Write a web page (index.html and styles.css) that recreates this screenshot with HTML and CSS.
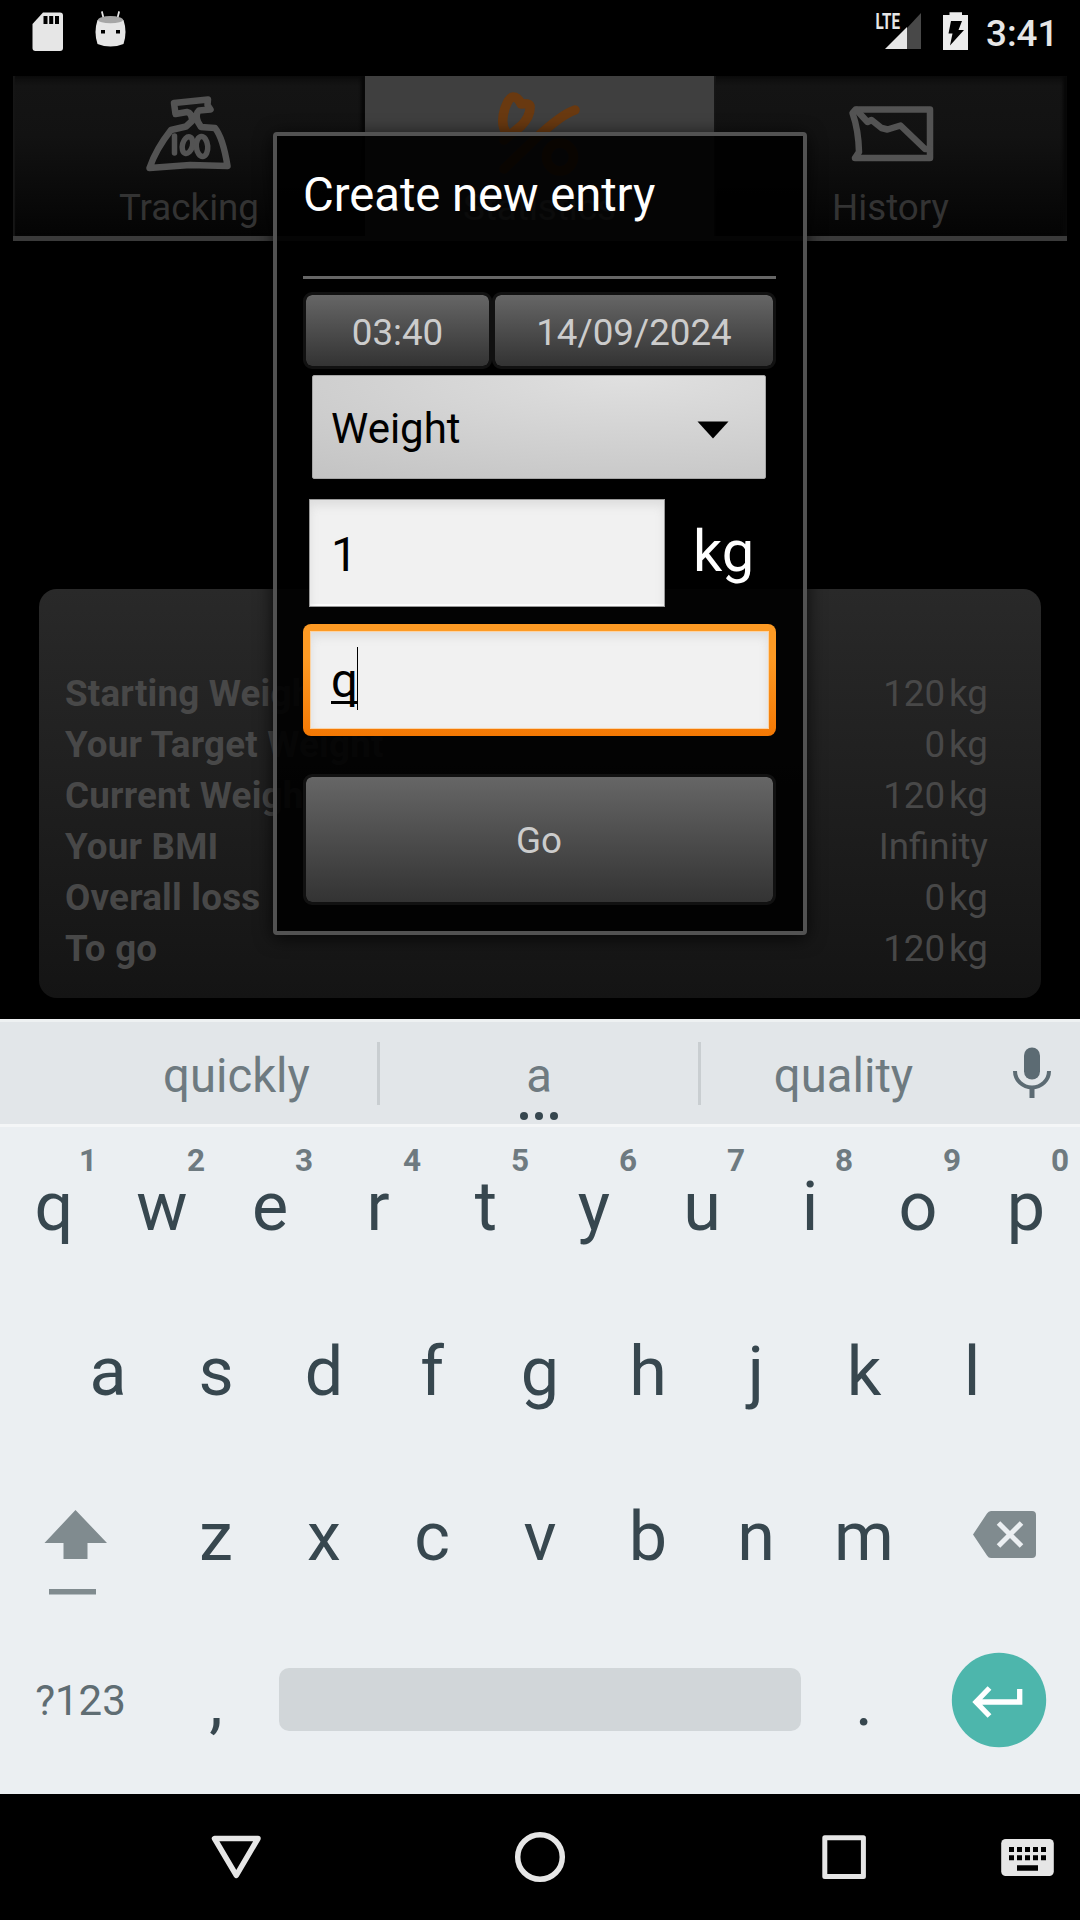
FILE: index.html
```html
<!DOCTYPE html>
<html lang="en">
<head>
<meta charset="utf-8">
<title>Create new entry</title>
<link rel="stylesheet" href="styles.css">
</head>
<body>
<div class="phone">
  <header class="status">
    <svg class="status-left" viewBox="0 0 140 76" width="140" height="76">
      <path fill="#e6e6e6" d="M43 12.5H60a3 3 0 0 1 3 3V48a3 3 0 0 1-3 3H35.500a3 3 0 0 1-3-3V24z"/>
      <path d="M43.500 16h4v8h-4zM49.200 16h4v8h-4zM55 16h4v8h-4z"/>
      <path stroke="#e6e6e6" stroke-width="1.800" stroke-linecap="round" d="M102 12l1.500 6M119 12l-1.500 6"/>
      <path fill="#e6e6e6" d="M97.500 20q13-5 26 0 4 12 0 24-13 5-26 0-4-12 0-24z"/>
      <ellipse cx="110.500" cy="19.700" rx="12.500" ry="3.600" fill="#a6a6a6"/>
      <path d="M101 30h4v3.500h-4zM116 30h4v3.500h-4z"/>
    </svg>
    <svg class="status-right" viewBox="870 0 108 76" width="108" height="76">
      <text class="lte" x="875.500" y="29" textLength="24.500" lengthAdjust="spacingAndGlyphs">LTE</text>
      <path fill="#484848" d="M907 28L921 13V49H907z"/>
      <path fill="#e6e6e6" d="M885 49L907 27V49z"/>
      <path fill="#ececec" d="M943 15h6.500v-2.800h12.500V15h6v35h-25z"/>
      <path d="M951 21h11l-3.500 9h5.500L950 45.500l2.500-12h-4z"/>
    </svg>
    <span class="clock">3:41</span>
  </header>

  <main class="app">
    <nav class="tabs">
      <div class="tab">
        <svg class="tab-icon" viewBox="141 90 96 90" width="96" height="90" fill="none" stroke="#535353" stroke-width="6.500" stroke-linejoin="round" stroke-linecap="round">
          <path d="M174 103L208 99.500 207.500 105 210.500 109.500 199 110.500Q195 114 198 122L201 127 215 128Q223 138 227.500 166L190 165 149.500 168Q156 149 171 130L186 126.500 192 121Q192 113 187 112L175.500 114z"/>
          <path stroke-width="5.500" d="M174.500 136V153"/>
          <ellipse cx="187.500" cy="145" rx="5" ry="8.500" stroke-width="5.500" transform="rotate(15 187 145)"/>
          <ellipse cx="202" cy="146.500" rx="5.700" ry="10" stroke-width="5.500" transform="rotate(-5 202 146)"/>
        </svg>
        <span class="tab-label">Tracking</span>
      </div>
      <div class="tab tab-active">
        <svg class="tab-icon" viewBox="492 90 96 90" width="96" height="90" fill="none" stroke="#693910" stroke-width="9.500" stroke-linejoin="round" stroke-linecap="round">
          <path d="M506 132Q500 124 505 108 509 97 513 97 518 97 521 104 529 103 530 106 531 116 521 126L504 140"/>
          <path d="M575 110Q562 114 535 139L504 169"/>
          <ellipse cx="560" cy="157" rx="13.500" ry="14"/>
        </svg>
        <span class="tab-label">Statistics</span>
      </div>
      <div class="tab">
        <svg class="tab-icon" viewBox="842.500 90 96 90" width="96" height="90" fill="none" stroke="#535353" stroke-width="6.500" stroke-linejoin="round" stroke-linecap="round">
          <path d="M852 113L855 109.500H929.500V158H854.500L858.500 152Q858 130 852 113z"/>
          <path d="M856 110L867 122 871 120 881 128 887 129.500 900 125.500 924.500 149 929 149"/>
        </svg>
        <span class="tab-label">History</span>
      </div>
    </nav>

    <section class="stats">
      <div class="stat"><b>Starting Weight</b><span>120<i>kg</i></span></div>
      <div class="stat"><b>Your Target Weight</b><span>0<i>kg</i></span></div>
      <div class="stat"><b>Current Weight</b><span>120<i>kg</i></span></div>
      <div class="stat"><b>Your BMI</b><span>Infinity</span></div>
      <div class="stat"><b>Overall loss</b><span>0<i>kg</i></span></div>
      <div class="stat"><b>To go</b><span>120<i>kg</i></span></div>
    </section>
  </main>

  <section class="dialog">
    <h1 class="dialog-title">Create new entry</h1>
    <div class="when">
      <div class="button time">03:40</div>
      <div class="button date">14/09/2024</div>
    </div>
    <div class="spinner">
      <span>Weight</span>
      <svg class="arrow" viewBox="0 0 32 18" width="32" height="18"><path d="M.500.500H31.500L16 17.500z"/></svg>
    </div>
    <div class="amount">
      <div class="field">1</div>
      <span class="unit">kg</span>
    </div>
    <div class="focus"><div class="field-inner"><span class="composing">q</span><span class="caret"></span></div></div>
    <div class="button go">Go</div>
  </section>

  <section class="keyboard">
    <div class="suggestions">
      <span class="word first">quickly</span>
      <span class="rule"></span>
      <span class="word">a
        <svg class="more" viewBox="0 0 40 10" width="40" height="10" fill="#37474f"><circle cx="5" cy="5" r="4"/><circle cx="20" cy="5" r="4"/><circle cx="35" cy="5" r="4"/></svg>
      </span>
      <span class="rule"></span>
      <span class="word last">quality</span>
      <svg class="mic" viewBox="1003 1022 77 102" width="77" height="102">
        <rect x="1024" y="1047.500" width="16" height="32" rx="8" fill="#5c6b73"/>
        <path d="M1015 1071a17 16.500 0 0 0 34 0" fill="none" stroke="#5c6b73" stroke-width="4"/>
        <path d="M1029.500 1088h5v10h-5z" fill="#5c6b73"/>
      </svg>
    </div>
    <div class="row">
      <div class="key">q<sup>1</sup></div><div class="key">w<sup>2</sup></div><div class="key">e<sup>3</sup></div><div class="key">r<sup>4</sup></div><div class="key">t<sup>5</sup></div><div class="key">y<sup>6</sup></div><div class="key">u<sup>7</sup></div><div class="key">i<sup>8</sup></div><div class="key">o<sup>9</sup></div><div class="key">p<sup>0</sup></div>
    </div>
    <div class="row">
      <div class="key">a</div><div class="key">s</div><div class="key">d</div><div class="key">f</div><div class="key">g</div><div class="key">h</div><div class="key">j</div><div class="key">k</div><div class="key">l</div>
    </div>
    <div class="row">
      <svg viewBox="0 1457 162 165" width="162" height="165" fill="#808b8f"><path d="M75.500 1510L107 1543H87.500V1559H63.500V1543H44.500zM49 1589h47v5.500H49z"/></svg>
      <div class="key">z</div><div class="key">x</div><div class="key">c</div><div class="key">v</div><div class="key">b</div><div class="key">n</div><div class="key">m</div>
      <svg viewBox="918 1457 162 165" width="162" height="165"><path fill="#808b8f" d="M973 1534.500L987 1513.500Q988.500 1511 991 1511H1032a4 4 0 0 1 4 4V1554a4 4 0 0 1-4 4H991Q988.500 1558 987 1555.500z"/><path stroke="#ebeff2" stroke-width="5" d="M998.500 1523L1021.500 1546M1021.500 1523L998.500 1546"/></svg>
    </div>
    <div class="row">
      <div class="key symbols">?123</div>
      <div class="key">,</div>
      <div class="space"></div>
      <div class="key">.</div>
      <svg viewBox="918 1622 162 165" width="162" height="165"><ellipse cx="999" cy="1700" rx="47.200" ry="47.300" fill="#4db6ac"/><path fill="none" stroke="#fff" stroke-width="5.300" d="M989.500 1688L976 1702 989.500 1716M977 1702H1019.700V1689"/></svg>
    </div>
  </section>

  <footer class="navbar">
    <svg viewBox="0 1794 1080 126" width="1080" height="126" fill="none" stroke="#e6e6e6" stroke-width="5.500" stroke-linejoin="round">
      <path d="M214.500 1838.500H258L236.300 1875.300z"/>
      <circle cx="540" cy="1857" r="22.300"/>
      <rect x="824.800" y="1837.800" width="38.600" height="38.600" stroke-width="5"/>
      <rect x="1001.200" y="1839" width="52.600" height="37" rx="4.500" fill="#e6e6e6" stroke="none"/>
      <path stroke="#000" stroke-width="5" stroke-dasharray="5 3" d="M1009 1849.500h37.500M1009 1857.700h37.500"/>
      <path stroke="#000" d="M1017 1868h21"/>
    </svg>
  </footer>
</div>
</body>
</html>
```
FILE: styles.css
```css
* { box-sizing: border-box; }

body {
  margin: 0;
  background: #000;
  font-family: Roboto, "Liberation Sans", sans-serif;
  font-size: 36.75px;
}

svg { display: block; flex: none; }

.phone {
  position: relative;
  display: flex;
  flex-direction: column;
  width: 1080px;
  height: 1920px;
  overflow: hidden;
  background: #000;
}

/* Status bar */
.status { display: flex; height: 76px; }
.status-right { margin-left: auto; }
.lte { fill: #e6e6e6; font-size: 21.5px; font-weight: 700; }
.clock {
  width: 102px;
  padding-left: 8px;
  color: #e6e6e6;
  font-weight: 500;
  line-height: 68px;
}

/* Dimmed activity behind the dialog */
.app { height: 943px; }

.tabs {
  display: grid;
  grid-template-columns: 352px 349px 353px;
  height: 165px;
  margin: 0 13px;
}

.tab {
  display: flex;
  flex-direction: column;
  align-items: center;
  padding-top: 14px;
  border-bottom: 5px solid #3a3a3a;
  background: linear-gradient(#0c0c0c, #141414 10px, #121212 60px, #040404 100%);
  box-shadow: inset 2px 0 1px #161616, inset -4px 0 3px #080808;
  color: #333;
}

.tab-active {
  border-bottom: 0;
  background: #3f3f3f;
  box-shadow: none;
  color: #777;
}

.tab-label { padding-top: 6px; line-height: 43px; }

.stats {
  height: 409px;
  margin: 348px 39px 0;
  padding: 79px 53px 0 26px;
  border-radius: 18px;
  background: linear-gradient(#292929, #141414);
  color: #484848;
  line-height: 51px;
}

.stat { display: flex; justify-content: space-between; }
.stat b { letter-spacing: .2px; }
.stat i { margin-left: 4px; font-style: normal; }

/* Dialog */
.dialog {
  position: absolute;
  top: 132px;
  left: 273px;
  width: 534px;
  height: 803px;
  padding: 31px 27px 0 26px;
  border: 4px solid #525252;
  border-radius: 4px;
  background: rgba(0, 0, 0, .91);
  box-shadow: 0 3px 18px rgba(0, 0, 0, .75);
  color: #fff;
}

.dialog-title {
  height: 112px;
  margin: 0 0 13px;
  border-bottom: 3px solid #666;
  font-size: 47.25px;
  font-weight: 400;
  letter-spacing: -.05px;
  line-height: 56px;
}

.when { display: grid; grid-template-columns: 189px 284px; height: 77px; }

.button {
  display: flex;
  align-items: center;
  justify-content: center;
  padding-top: 3px;
  border: 3px solid #111;
  border-radius: 9px;
  background: linear-gradient(#666, #333) padding-box;
  color: #ccc;
}

.spinner {
  display: flex;
  align-items: center;
  justify-content: space-between;
  width: 454px;
  height: 104px;
  margin: 6px 0 0 9px;
  padding: 2px 36px 0 18px;
  border: 1px solid #a5a5a5;
  border-radius: 2px;
  background: radial-gradient(ellipse 120% 130% at 70% 0, #e0e0e0, #c2c2c2);
  color: #000;
  font-size: 42px;
}

.arrow { margin-top: 4px; }

.amount { display: flex; height: 108px; margin: 20px 0 0 6px; }

.field {
  width: 356px;
  padding-left: 21px;
  border: 1px solid #999;
  background: #f1f1f1;
  box-shadow: inset 0 6px 10px #dedede, inset 0 -2px 1px #fff;
  color: #000;
  font-size: 47.25px;
  line-height: 110px;
}

.unit { margin-left: 28px; font-size: 57.75px; line-height: 105px; }

.focus {
  height: 112px;
  margin-top: 17px;
  padding: 7px;
  border-radius: 8px;
  background: linear-gradient(#fd9a24 30%, #f37804);
}

.field-inner {
  display: flex;
  height: 98px;
  padding: 15px 0 0 20px;
  border: 1px solid #fbd3a4;
  background: #f1f1f1;
  box-shadow: inset 0 5px 10px #dedede;
  color: #000;
  font-size: 47.25px;
  line-height: 68px;
}

.composing { width: 26px; height: 57px; border-bottom: 3px solid #000; }
.caret { width: 1px; height: 63px; background: #000; }
.go { height: 131px; margin-top: 38px; padding: 2px 1px 0 0; }

/* Keyboard */
.keyboard { height: 775px; background: #ebeff2; color: #37474f; }

.suggestions {
  display: flex;
  align-items: center;
  height: 108px;
  border-top: 3px solid #eef1f2;
  border-bottom: 3px solid #f4f6f7;
  background: #e2e6e9;
  color: #6e7a80;
  font-size: 47.25px;
}

.word { position: relative; width: 318px; line-height: 102px; padding-top: 6px; text-align: center; }
.word.first { width: 377px; padding-left: 96px; }
.word.last { width: 302px; padding-right: 17px; }
.rule { width: 3px; height: 63px; background: #c9ced1; }
.more { position: absolute; left: 139px; bottom: 6px; }

.row { display: flex; justify-content: center; height: 165px; }

.key {
  position: relative;
  width: 108px;
  height: 160px;
  font-size: 68.25px;
  line-height: 160px;
  text-align: center;
}

.key sup {
  position: absolute;
  top: 15px;
  right: 11px;
  color: #6e7a80;
  font-size: 31.5px;
  font-weight: 700;
  line-height: 37px;
}

.key.symbols { width: 162px; padding-right: 1px; color: #5f6d73; font-size: 42px; line-height: 158px; }

.space {
  width: 522px;
  height: 63px;
  margin: 46px 9px 0;
  border-radius: 10px;
  background: #d1d6d9;
}

.navbar { height: 126px; }
```
